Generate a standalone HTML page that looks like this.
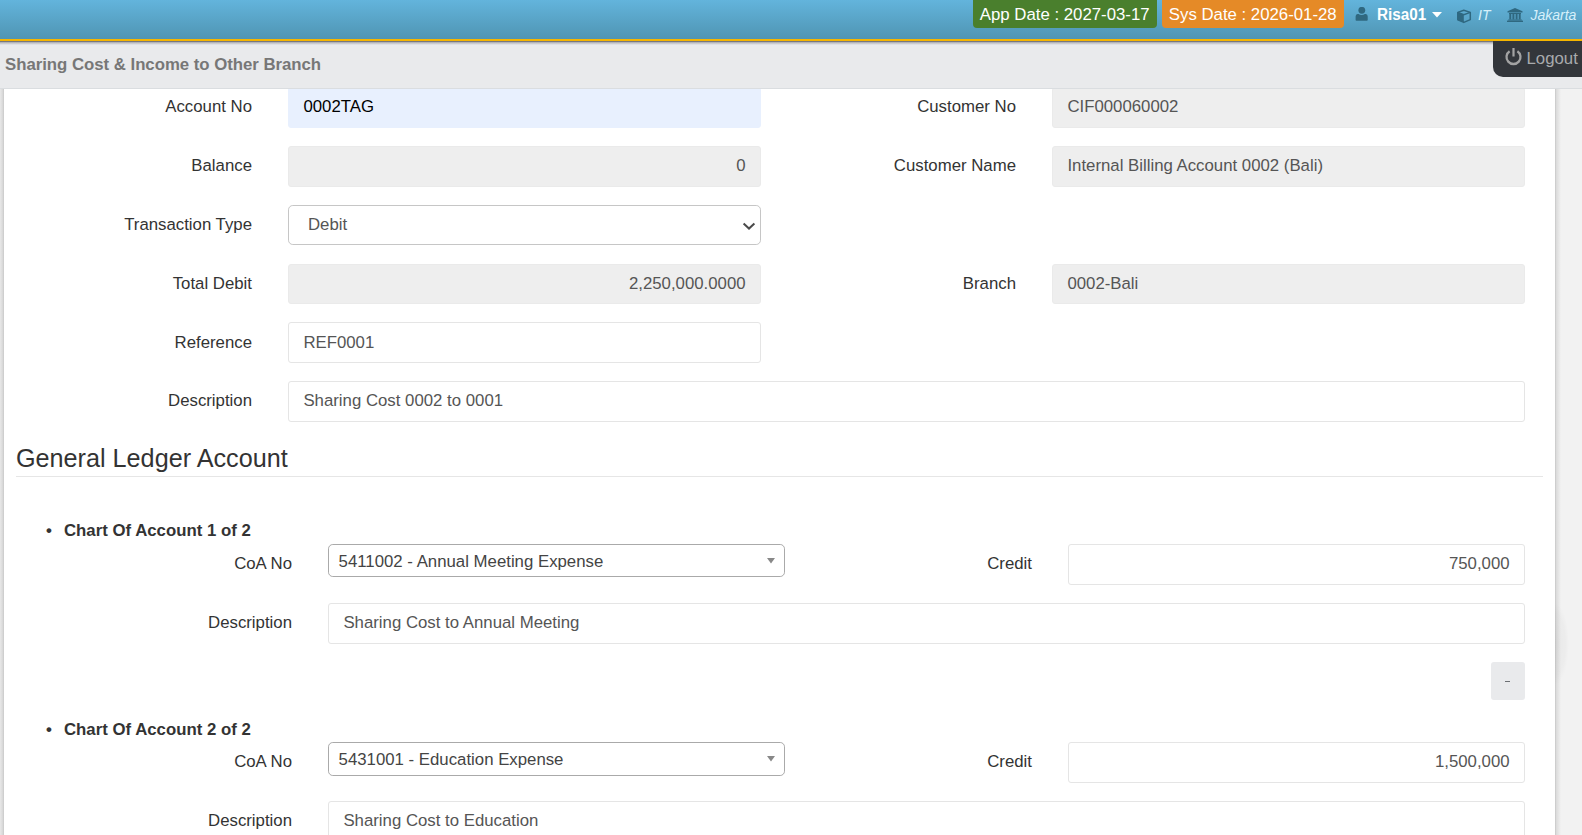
<!DOCTYPE html>
<html><head><meta charset="utf-8">
<style>
*{box-sizing:border-box;margin:0;padding:0}
html,body{width:1582px;height:835px;overflow:hidden;background:#f2f2f2;font-family:"Liberation Sans",sans-serif;font-size:16.8px;color:#333}
.abs{position:absolute;white-space:nowrap}
#topbar{position:absolute;left:0;top:0;width:1582px;height:39px;background:linear-gradient(#63b4dc,#4f95b3)}
#orange{position:absolute;left:0;top:39px;width:1582px;height:2px;background:#f5b500}
#shadow{z-index:6;position:absolute;left:0;top:41px;width:1582px;height:4px;background:linear-gradient(rgba(40,40,50,.75),rgba(40,40,50,.25) 40%,rgba(0,0,0,0))}
#titlebar{z-index:5;position:absolute;left:0;top:41px;width:1582px;height:48px;background:#e9eaec;border-bottom:1px solid #dadde0}
.badge{position:absolute;top:-6px;height:33.6px;border-radius:4px;color:#fff;font-size:16.8px;line-height:17px;padding-top:12px;white-space:nowrap}
#title{z-index:7;position:absolute;left:5px;top:55.5px;font-weight:bold;color:#777;font-size:16.8px;line-height:17px;white-space:nowrap;letter-spacing:-0.025px}
#logout{z-index:7;position:absolute;left:1493px;top:41px;width:100px;height:36px;background:#33363b;border-bottom-left-radius:10px}
#container{position:absolute;left:0;top:89px;width:1555px;height:760px;background:#fff}
#lborder{position:absolute;left:0;top:89px;width:4px;height:760px;background:linear-gradient(90deg,#e8e8e8,#dadada 60%,#c9c9c9)}
#rshadow{position:absolute;left:1555px;top:89px;width:6px;height:760px;background:linear-gradient(90deg,#c6c6c6,#dcdcdc 25%,#f2f2f2)}
.lbl{position:absolute;text-align:right;white-space:nowrap;color:#333;font-size:16.8px;line-height:20px}
.inp{position:absolute;height:40.8px;border:1.2px solid #e5e5e5;border-radius:3px;background:#fff;color:#555;font-size:16.8px;line-height:20px;padding:9.2px 14.4px;white-space:nowrap}
.ro{background:#eeeeee;border-color:#eaeaea}
.sel{position:absolute;border:1.2px solid #aaa;border-radius:4.8px;background:#fff;color:#444;font-size:16.8px;line-height:20px;padding:7px 9.6px 0 9.6px;white-space:nowrap;height:33.6px}
</style></head><body>
<div id="topbar"></div>
<div id="orange"></div>
<div id="titlebar"></div>
<div id="shadow"></div>
<div class="badge" style="left:973px;width:184px;background:#4a7f2d;padding-left:6.8px">App Date : 2027-03-17</div>
<div class="badge" style="left:1162px;width:182px;background:#e58a27;padding-left:6.8px">Sys Date : 2026-01-28</div>
<div id="title">Sharing Cost &amp; Income to Other Branch</div>
<div id="logout"></div>
<div id="container"></div>
<div id="lborder"></div>
<div id="rshadow"></div>
<div style="position:absolute;left:1555px;top:598px;width:20px;height:92px;overflow:hidden"><div style="position:absolute;left:-14px;top:5px;width:28px;height:82px;border-radius:50%;background:radial-gradient(closest-side,rgba(0,0,0,.04),rgba(0,0,0,.025) 75%,rgba(0,0,0,0))"></div></div>
<div class="lbl" style="left:52px;width:200px;top:97.2px">Account No</div>
<div class="lbl" style="left:52px;width:200px;top:156.0px">Balance</div>
<div class="lbl" style="left:52px;width:200px;top:214.8px">Transaction Type</div>
<div class="lbl" style="left:52px;width:200px;top:273.6px">Total Debit</div>
<div class="lbl" style="left:52px;width:200px;top:333.1px">Reference</div>
<div class="lbl" style="left:52px;width:200px;top:391.2px">Description</div>
<div class="inp " style="left:288px;top:87.2px;width:473px;background:#e8f0fe;border-color:#e8f0fe;color:#000">0002TAG</div>
<div class="inp ro" style="left:288px;top:146.0px;width:473px;text-align:right">0</div>
<div class="inp " style="left:288px;top:204.8px;width:473px;height:39.8px;border-color:#c6c6c6;border-radius:4.8px;padding-left:19px;color:#555">Debit</div>
<div class="inp ro" style="left:288px;top:263.59999999999997px;width:473px;text-align:right">2,250,000.0000</div>
<div class="inp " style="left:288px;top:322.4px;width:473px;">REF0001</div>
<div class="inp " style="left:288px;top:381.2px;width:1237px;">Sharing Cost 0002 to 0001</div>
<div class="lbl" style="left:796px;width:220px;top:97.2px">Customer No</div>
<div class="lbl" style="left:796px;width:220px;top:156.0px">Customer Name</div>
<div class="lbl" style="left:796px;width:220px;top:273.6px">Branch</div>
<div class="inp ro" style="left:1052px;top:87.2px;width:473px;">CIF000060002</div>
<div class="inp ro" style="left:1052px;top:146.0px;width:473px;">Internal Billing Account 0002 (Bali)</div>
<div class="inp ro" style="left:1052px;top:263.59999999999997px;width:473px;">0002-Bali</div>
<div class="abs" style="left:16px;top:445px;font-size:25.2px;line-height:26px;color:#333">General Ledger Account</div>
<div class="abs" style="left:16px;top:476px;width:1527px;height:1px;background:#e6e6e6"></div>
<div class="abs" style="left:46px;top:521.2px;font-weight:bold;line-height:20px;color:#333"><span style="display:inline-block;width:18px">&#8226;</span>Chart Of Account 1 of 2</div>
<div class="lbl" style="left:92px;width:200px;top:553.8px">CoA No</div>
<div class="sel" style="left:328px;top:543.6px;width:457px">5411002 - Annual Meeting Expense</div>
<svg class="abs" style="left:767px;top:557.6px" width="8" height="6" viewBox="0 0 8 6"><path d="M0 0 L8 0 L4 5.5 Z" fill="#888"/></svg>
<div class="lbl" style="left:832px;width:200px;top:553.8px">Credit</div>
<div class="inp " style="left:1068px;top:544.2px;width:457px;text-align:right">750,000</div>
<div class="lbl" style="left:92px;width:200px;top:613.0px">Description</div>
<div class="inp " style="left:328px;top:603.0px;width:1197px;">Sharing Cost to Annual Meeting</div>
<div class="abs" style="left:46px;top:719.8px;font-weight:bold;line-height:20px;color:#333"><span style="display:inline-block;width:18px">&#8226;</span>Chart Of Account 2 of 2</div>
<div class="lbl" style="left:92px;width:200px;top:752.4px">CoA No</div>
<div class="sel" style="left:328px;top:742.2px;width:457px">5431001 - Education Expense</div>
<svg class="abs" style="left:767px;top:756.1999999999999px" width="8" height="6" viewBox="0 0 8 6"><path d="M0 0 L8 0 L4 5.5 Z" fill="#888"/></svg>
<div class="lbl" style="left:832px;width:200px;top:752.4px">Credit</div>
<div class="inp " style="left:1068px;top:741.8px;width:457px;text-align:right">1,500,000</div>
<div class="lbl" style="left:92px;width:200px;top:810.6px">Description</div>
<div class="inp " style="left:328px;top:800.6px;width:1197px;">Sharing Cost to Education</div>
<div class="abs" style="left:1491px;top:662.2px;width:34px;height:37.6px;background:#e9eaec;border-radius:3px"></div>
<div class="abs" style="left:1505px;top:681px;width:5px;height:1.2px;background:#6c6f73"></div>

<!-- top bar icons -->
<svg class="abs" style="left:1354.6px;top:7px" width="14" height="15" viewBox="0 0 14 15"><circle cx="6.8" cy="3.35" r="3.4" fill="#2f6880"/><path d="M0.6 12.9 Q0.6 13.7 1.4 13.7 L11.9 13.7 Q12.7 13.7 12.7 12.9 L12.7 9.4 Q12.7 7.2 10.8 7 L9.8 7 Q8.6 7.9 6.6 7.9 Q4.7 7.9 3.6 7 L2.5 7 Q0.6 7.2 0.6 9.4 Z" fill="#2f6880"/></svg>
<div class="abs" style="left:1377px;top:6.3px;font-size:16.8px;line-height:17px;font-weight:bold;color:#fff;transform:scaleX(0.91);transform-origin:0 0">Risa01</div>
<svg class="abs" style="left:1432px;top:12px" width="10" height="6" viewBox="0 0 10 6"><path d="M0 0 L10 0 L5 5.5 Z" fill="#fff"/></svg>
<svg class="abs" style="left:1456px;top:8.5px" width="16" height="15" viewBox="0 0 16 15"><path d="M7.8 1.3 L14.3 3.4 L14.3 10.6 L7.8 13.4 L1.8 10.7 L1.8 3.4 Z" fill="none" stroke="#2f6880" stroke-width="1.5" stroke-linejoin="round"/><path d="M1.8 3.4 L7.8 5.6 L7.8 13.4 L1.8 10.7 Z" fill="#2f6880"/><path d="M1.8 3.4 L7.8 5.6 L14.3 3.4" fill="none" stroke="#2f6880" stroke-width="1.5"/></svg>
<div class="abs" style="left:1478px;top:8px;font-size:14px;line-height:14px;font-style:italic;color:#d6f0fb">IT</div>
<svg class="abs" style="left:1507px;top:8px" width="16" height="14" viewBox="0 0 16 14"><path d="M8 0 L15.5 3.2 L15.5 4.4 L0.5 4.4 L0.5 3.2 Z" fill="#2f6880"/><rect x="2" y="5" width="12" height="1" fill="#2f6880"/><rect x="2.3" y="6" width="2" height="5.5" fill="#2f6880"/><rect x="5.4" y="6" width="2" height="5.5" fill="#2f6880"/><rect x="8.6" y="6" width="2" height="5.5" fill="#2f6880"/><rect x="11.7" y="6" width="2" height="5.5" fill="#2f6880"/><rect x="1.2" y="11.5" width="13.6" height="1" fill="#2f6880"/><rect x="0" y="12.6" width="16" height="1.4" fill="#2f6880"/></svg>
<div class="abs" style="left:1530.5px;top:8px;font-size:14px;line-height:14px;font-style:italic;color:#d6f0fb">Jakarta</div>
<!-- logout -->
<svg class="abs" style="z-index:8;left:1504px;top:47px" width="19" height="19" viewBox="0 0 19 19"><path d="M5.6 4.2 A7 7 0 1 0 13.4 4.2" fill="none" stroke="#a3a3a3" stroke-width="2.3"/><rect x="8.4" y="1" width="2.2" height="8.5" fill="#a3a3a3"/></svg>
<div class="abs" style="z-index:8;left:1526.5px;top:50px;font-size:16.8px;line-height:17px;color:#a8aaad">Logout</div>
<!-- select chevron -->
<svg class="abs" style="left:741.5px;top:221.5px" width="14" height="9" viewBox="0 0 14 9"><path d="M1.6 1.6 L7 6.6 L12.4 1.6" fill="none" stroke="#4a4a4a" stroke-width="2"/></svg>
</body></html>
